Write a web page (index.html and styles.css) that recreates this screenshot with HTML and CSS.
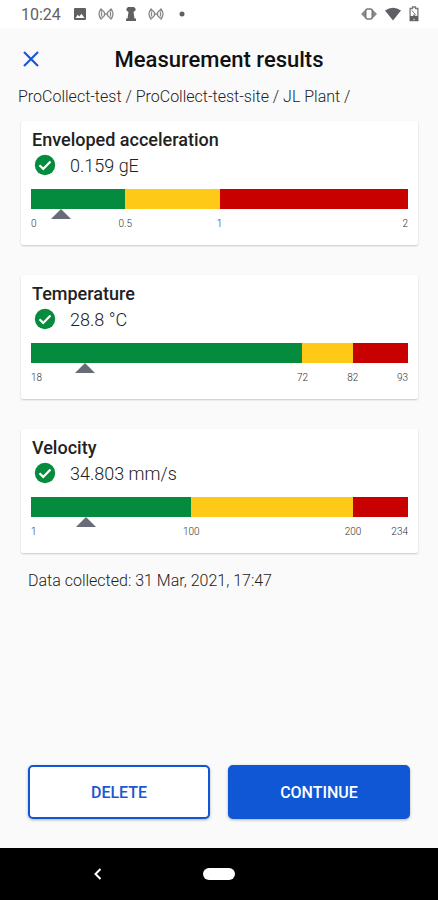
FILE: index.html
```html
<!DOCTYPE html>
<html lang="en">
<head>
  <meta charset="UTF-8">
  <meta name="viewport" content="width=device-width, initial-scale=1.0">
  <title>Measurement results</title>
  <link rel="stylesheet" href="styles.css">
</head>
<body>
  <div class="status-bar">
    <span class="clock">10:24</span>
    <div class="notifications">
      <svg width="14" height="14" viewBox="0 0 14 14"><path fill="#5f6063" fill-rule="evenodd" d="M2 1h10a1 1 0 0 1 1 1v10a1 1 0 0 1-1 1H2a1 1 0 0 1-1-1V2a1 1 0 0 1 1-1zM2.500 11h9L8.500 6.800 6.300 9.500 4.800 7.800z"/></svg>
      <svg width="16" height="14" viewBox="0 0 16 14" fill="none" stroke="#88898b" stroke-width="1.300"><path d="M3 2Q-1 7 3 12L6.500 8.500V5.500zM13 2Q17 7 13 12L9.500 8.500V5.500zM3.500 4.500v5M12.500 4.500v5M6.500 7h3"/></svg>
      <svg width="12" height="16" viewBox="0 0 12 16" fill="#5f6063"><path d="M3 1h6l1.500 1.500v2L8.500 6l1 6.500H11V15H1v-2.500h1.500l1-6.500-2-1.500v-2z"/></svg>
      <svg width="16" height="14" viewBox="0 0 16 14" fill="none" stroke="#88898b" stroke-width="1.300"><path d="M3 2Q-1 7 3 12L6.500 8.500V5.500zM13 2Q17 7 13 12L9.500 8.500V5.500zM3.500 4.500v5M12.500 4.500v5M6.500 7h3"/></svg>
      <svg class="more" width="10" height="14" viewBox="0 0 10 14"><circle cx="7" cy="7" r="2.500" fill="#5f6063"/></svg>
    </div>
    <div class="system">
      <svg width="16" height="14" viewBox="0 0 16 14"><path fill="#88898b" d="M4 3v8L0 7zM12 3v8l4-4z"/><rect x="4.700" y="2" width="6.600" height="10" rx="2" fill="#fff" stroke="#77787b" stroke-width="1.600"/></svg>
      <svg width="16" height="14" viewBox="0 0 16 14"><path fill="#5f6063" d="M0 3.500Q8-2 16 3.500L8 13.500z"/></svg>
      <svg width="10" height="16" viewBox="0 0 10 16"><path fill="none" stroke="#77787b" stroke-width="1.300" d="M3.500 2.500V1h3v1.500h2.400v12H1.100v-12z"/><path fill="#5f6063" d="M1 10h3l1-2 1 2h3v5H6.500L5 12.500 3.500 15H1z"/><path stroke="#77787b" d="M3 4.500l4 5"/></svg>
    </div>
  </div>

  <main class="content">
    <header class="top-bar">
      <button class="close" type="button" aria-label="Close">
        <svg width="18" height="18" viewBox="0 0 18 18"><path d="M2 2l14 14M16 2L2 16" stroke="#1a57d6" stroke-width="2.200"/></svg>
      </button>
      <h1>Measurement results</h1>
    </header>

    <p class="path">ProCollect-test / ProCollect-test-site / JL Plant /</p>

    <div class="cards">
      <section class="card">
        <h2>Enveloped acceleration</h2>
        <div class="reading">
          <svg width="22" height="22" viewBox="0 0 22 22"><circle cx="11" cy="11" r="10.200" fill="#058b3d"/><path d="M5.500 11.300l3.700 3.600 7.300-7.400" fill="none" stroke="#fff" stroke-width="2.200"/></svg>
          <span>0.159 gE</span>
        </div>
        <div class="bar">
          <div class="ok" style="flex-grow: 50"></div>
          <div class="warning" style="flex-grow: 50"></div>
          <div class="danger" style="flex-grow: 100"></div>
        </div>
        <div class="marker"><div style="margin-left: 7.95%"></div></div>
        <div class="ticks">
          <span class="first">0</span>
          <i style="flex-grow: 50"></i>
          <span>0.5</span>
          <i style="flex-grow: 50"></i>
          <span>1</span>
          <i style="flex-grow: 100"></i>
          <span class="last">2</span>
        </div>
      </section>

      <section class="card">
        <h2>Temperature</h2>
        <div class="reading">
          <svg width="22" height="22" viewBox="0 0 22 22"><circle cx="11" cy="11" r="10.200" fill="#058b3d"/><path d="M5.500 11.300l3.700 3.600 7.300-7.400" fill="none" stroke="#fff" stroke-width="2.200"/></svg>
          <span>28.8 °C</span>
        </div>
        <div class="bar">
          <div class="ok" style="flex-grow: 54"></div>
          <div class="warning" style="flex-grow: 10"></div>
          <div class="danger" style="flex-grow: 11"></div>
        </div>
        <div class="marker"><div style="margin-left: 14.4%"></div></div>
        <div class="ticks">
          <span class="first">18</span>
          <i style="flex-grow: 54"></i>
          <span>72</span>
          <i style="flex-grow: 10"></i>
          <span>82</span>
          <i style="flex-grow: 11"></i>
          <span class="last">93</span>
        </div>
      </section>

      <section class="card">
        <h2>Velocity</h2>
        <div class="reading">
          <svg width="22" height="22" viewBox="0 0 22 22"><circle cx="11" cy="11" r="10.200" fill="#058b3d"/><path d="M5.500 11.300l3.700 3.600 7.300-7.400" fill="none" stroke="#fff" stroke-width="2.200"/></svg>
          <span>34.803 mm/s</span>
        </div>
        <div class="bar">
          <div class="ok" style="flex-grow: 99"></div>
          <div class="warning" style="flex-grow: 100"></div>
          <div class="danger" style="flex-grow: 34"></div>
        </div>
        <div class="marker"><div style="margin-left: 14.5%"></div></div>
        <div class="ticks">
          <span class="first">1</span>
          <i style="flex-grow: 99"></i>
          <span>100</span>
          <i style="flex-grow: 100"></i>
          <span>200</span>
          <i style="flex-grow: 34"></i>
          <span class="last">234</span>
        </div>
      </section>
    </div>

    <p class="collected">Data collected: 31 Mar, 2021, 17:47</p>

    <div class="actions">
      <button class="btn delete" type="button">DELETE</button>
      <button class="btn continue" type="button">CONTINUE</button>
    </div>
  </main>

  <nav class="nav-bar">
    <button class="back" type="button" aria-label="Back">
      <svg width="10" height="12" viewBox="0 0 10 12"><path d="M7.500 1L2.500 6l5 5" fill="none" stroke="#fff" stroke-width="2"/></svg>
    </button>
    <button class="home" type="button" aria-label="Home"></button>
    <span></span>
  </nav>
</body>
</html>
```

FILE: styles.css
```css
* {
  box-sizing: border-box;
}

body {
  margin: 0;
  min-height: 100vh;
  display: flex;
  flex-direction: column;
  background-color: #fafafa;
  color: #222;
  font-family: Roboto, sans-serif;
}

h1, h2, p {
  margin: 0;
}

button {
  font-family: inherit;
  cursor: pointer;
}

svg {
  display: block;
}

/* Android status bar */
.status-bar {
  display: flex;
  align-items: center;
  height: 28px;
  padding: 0 19px 0 21px;
  background-color: #fff;
}

.clock {
  color: #5f6063;
  font-size: 16px;
}

.notifications, .system {
  display: flex;
  align-items: center;
}

.notifications {
  gap: 11px;
  margin-left: 12px;
}

.system {
  gap: 8px;
  margin-left: auto;
}

.content {
  flex: 1;
  display: flex;
  flex-direction: column;
}

.top-bar {
  display: grid;
  grid-template-columns: 18px 1fr 18px;
  align-items: center;
  height: 61px;
  padding: 0 22px;
}

.close {
  padding: 0;
  border: none;
  background: none;
}

h1 {
  color: #111;
  font-size: 22px;
  font-weight: 500;
  line-height: 24px;
  padding-top: 3px;
  text-align: center;
}

.path {
  padding: 0 18px;
  color: #222;
  font-size: 16px;
  font-weight: 300;
  line-height: 16px;
}

/* Cards */
.cards {
  display: flex;
  flex-direction: column;
  gap: 30px;
  padding: 16px 20px 0 21px;
}

.card {
  padding: 7px 10px 15px;
  background-color: #fff;
  border-radius: 2px;
  box-shadow: 0 1px 2px rgba(0, 0, 0, 0.2);
}

h2 {
  padding-left: 1px;
  font-size: 18px;
  font-weight: 500;
  line-height: 24px;
}

.reading {
  display: flex;
  align-items: center;
  gap: 14px;
  height: 26px;
  padding-left: 3px;
  font-size: 18px;
  font-weight: 300;
}

.bar {
  display: flex;
  height: 20px;
  margin-top: 11px;
}

.bar div {
  flex-basis: 0;
}

.ok {
  background-color: #058b3d;
}

.warning {
  background-color: #ffc917;
}

.danger {
  background-color: #c80000;
}

.marker {
  display: flex;
  height: 9px;
}

.marker div {
  display: flex;
  justify-content: center;
  width: 0;
}

.marker div::before {
  content: '';
  flex: none;
  border: 10px solid transparent;
  border-top-width: 0;
  border-bottom-color: #686b78;
}

.ticks {
  display: flex;
  color: #333;
  font-size: 10px;
  font-weight: 300;
  line-height: 12px;
}

/* zero width labels stay centred on the edge between two zones */
.ticks span {
  display: flex;
  justify-content: center;
  width: 0;
}

.ticks .first {
  justify-content: flex-start;
}

.ticks .last {
  justify-content: flex-end;
}

.collected {
  padding: 18px 28px;
  color: #222;
  font-size: 16px;
  font-weight: 300;
  line-height: 20px;
}

.actions {
  display: flex;
  gap: 18px;
  margin-top: auto;
  padding: 0 28px 29px;
}

.btn {
  flex: 1;
  height: 54px;
  border: 2px solid #1057d5;
  border-radius: 5px;
  font-size: 16px;
  font-weight: 500;
  box-shadow: 0 1px 3px rgba(0, 0, 0, 0.3);
}

.delete {
  background-color: #fff;
  color: #1a57d0;
}

.continue {
  background-color: #1057d5;
  color: #fff;
}

/* Android navigation bar */
.nav-bar {
  display: grid;
  grid-template-columns: 1fr 32px 1fr;
  align-items: center;
  height: 52px;
  padding: 0 2%;
  background-color: #000;
}

.back, .home {
  padding: 0;
  border: none;
}

.back {
  justify-self: center;
  margin-right: 16px;
  background: none;
}

.home {
  height: 12px;
  border-radius: 6px;
  background-color: #fff;
}
```
